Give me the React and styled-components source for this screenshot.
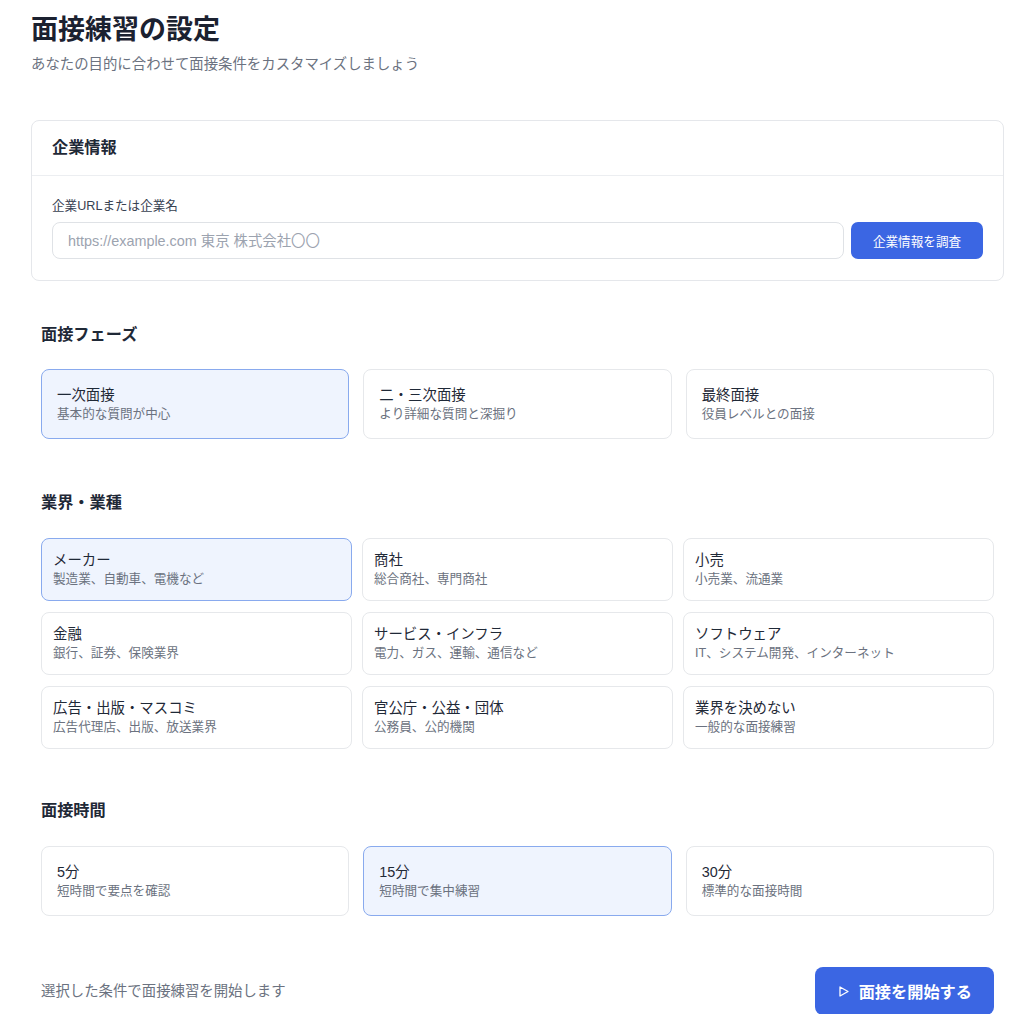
import React from "react";
import styled, { createGlobalStyle, css } from "styled-components";

const Global = createGlobalStyle`
  html, body { margin: 0; padding: 0; background: #ffffff; }
  body {
    font-family: "Liberation Sans", "Noto Sans CJK JP", sans-serif;
    color: #1f2937;
    -webkit-font-smoothing: antialiased;
  }
  * { box-sizing: border-box; }
`;

const Page = styled.main`
  padding: 12px 20px 0 31px;
  display: flex;
  flex-direction: column;
`;

const Title = styled.h1`
  margin: 0;
  font-size: 27px;
  line-height: 36px;
  font-weight: 700;
  color: #1b2130;
`;

const Subtitle = styled.p`
  margin: 5px 0 0;
  font-size: 14.4px;
  line-height: 22px;
  color: #6b7280;
`;

const Panel = styled.section`
  margin-top: 45px;
  border: 1px solid #e5e7eb;
  border-radius: 8px;
  background: #fff;
`;

const PanelHeader = styled.div`
  padding: 16px 20px 17px;
  border-bottom: 1px solid #eceef1;
  font-size: 16.2px;
  line-height: 21px;
  font-weight: 700;
  color: #1f2937;
`;

const PanelBody = styled.div`
  padding: 21px 20px 21px;
`;

const Label = styled.label`
  display: block;
  font-size: 12.6px;
  line-height: 18px;
  color: #374151;
  margin-bottom: 7px;
`;

const InputRow = styled.div`
  display: flex;
  gap: 7px;
`;

const Input = styled.input`
  flex: 1;
  height: 37px;
  border: 1px solid #dfe2e6;
  border-radius: 8px;
  padding: 0 15px;
  font-family: inherit;
  font-size: 14.4px;
  color: #1f2937;
  outline: none;
  &::placeholder { color: #9ca3af; }
`;

const PrimaryButton = styled.button`
  border: none;
  background: #3b66e3;
  color: #fff;
  font-family: inherit;
  cursor: pointer;
  display: inline-flex;
  align-items: center;
  justify-content: center;
  ${(p) =>
    p.$large
      ? css`
          height: 48px;
          padding: 0 22px 0 24px;
          border-radius: 8px;
          font-size: 16.2px;
          font-weight: 700;
          gap: 10px;
        `
      : css`
          height: 37px;
          width: 132px;
          border-radius: 7px;
          font-size: 12.6px;
          font-weight: 400;
        `}
`;

const Section = styled.section`
  margin-top: ${(p) => p.$top}px;
  padding: 0 10px;
`;

const SectionTitle = styled.h2`
  margin: 0 0 ${(p) => p.$gap}px;
  font-size: 16.2px;
  line-height: 22px;
  font-weight: 700;
  color: #1f2937;
`;

const Grid = styled.div`
  display: grid;
  grid-template-columns: repeat(3, 1fr);
  column-gap: ${(p) => p.$gap}px;
  row-gap: 11px;
`;

const Option = styled.button`
  display: flex;
  flex-direction: column;
  justify-content: center;
  align-items: flex-start;
  text-align: left;
  font-family: inherit;
  cursor: pointer;
  border-radius: 8px;
  border: 1px solid ${(p) => (p.$selected ? "#89aaee" : "#e6e8eb")};
  background: ${(p) => (p.$selected ? "#eff4fe" : "#ffffff")};
  padding: ${(p) => (p.$compact ? "0 11px 2px" : "0 15px")};
  height: ${(p) => (p.$compact ? 63 : 70)}px;
`;

const OptionTitle = styled.span`
  font-size: 14.4px;
  line-height: 20px;
  color: #1f2937;
`;

const OptionDesc = styled.span`
  font-size: 12.6px;
  line-height: 18px;
  color: #6b7280;
`;

const Footer = styled.div`
  margin-top: 51px;
  padding: 0 10px;
  display: flex;
  align-items: center;
  justify-content: space-between;
`;

const FooterText = styled.p`
  margin: 0;
  font-size: 14.4px;
  line-height: 22px;
  color: #6b7280;
`;

const PlayIcon = () => (
  <svg width="10" height="11" viewBox="0 0 10 11" fill="none">
    <path d="M1 1 L9 5.5 L1 10 Z" stroke="#fff" strokeWidth="1.3" strokeLinejoin="round" />
  </svg>
);

const phases = [
  { t: "一次面接", d: "基本的な質問が中心", s: true },
  { t: "二・三次面接", d: "より詳細な質問と深掘り" },
  { t: "最終面接", d: "役員レベルとの面接" },
];

const industries = [
  { t: "メーカー", d: "製造業、自動車、電機など", s: true },
  { t: "商社", d: "総合商社、専門商社" },
  { t: "小売", d: "小売業、流通業" },
  { t: "金融", d: "銀行、証券、保険業界" },
  { t: "サービス・インフラ", d: "電力、ガス、運輸、通信など" },
  { t: "ソフトウェア", d: "IT、システム開発、インターネット" },
  { t: "広告・出版・マスコミ", d: "広告代理店、出版、放送業界" },
  { t: "官公庁・公益・団体", d: "公務員、公的機関" },
  { t: "業界を決めない", d: "一般的な面接練習" },
];

const durations = [
  { t: "5分", d: "短時間で要点を確認" },
  { t: "15分", d: "短時間で集中練習", s: true },
  { t: "30分", d: "標準的な面接時間" },
];

export default function App() {
  return (
    <>
      <Global />
      <Page>
        <Title>面接練習の設定</Title>
        <Subtitle>あなたの目的に合わせて面接条件をカスタマイズしましょう</Subtitle>

        <Panel>
          <PanelHeader>企業情報</PanelHeader>
          <PanelBody>
            <Label>企業URLまたは企業名</Label>
            <InputRow>
              <Input placeholder="https://example.com 東京 株式会社〇〇" />
              <PrimaryButton>企業情報を調査</PrimaryButton>
            </InputRow>
          </PanelBody>
        </Panel>

        <Section $top={42}>
          <SectionTitle $gap={24}>面接フェーズ</SectionTitle>
          <Grid $gap={14}>
            {phases.map((o) => (
              <Option key={o.t} $selected={o.s}>
                <OptionTitle>{o.t}</OptionTitle>
                <OptionDesc>{o.d}</OptionDesc>
              </Option>
            ))}
          </Grid>
        </Section>

        <Section $top={52}>
          <SectionTitle $gap={25}>業界・業種</SectionTitle>
          <Grid $gap={10}>
            {industries.map((o) => (
              <Option key={o.t} $selected={o.s} $compact>
                <OptionTitle>{o.t}</OptionTitle>
                <OptionDesc>{o.d}</OptionDesc>
              </Option>
            ))}
          </Grid>
        </Section>

        <Section $top={50}>
          <SectionTitle $gap={25}>面接時間</SectionTitle>
          <Grid $gap={14}>
            {durations.map((o) => (
              <Option key={o.t} $selected={o.s}>
                <OptionTitle>{o.t}</OptionTitle>
                <OptionDesc>{o.d}</OptionDesc>
              </Option>
            ))}
          </Grid>
        </Section>

        <Footer>
          <FooterText>選択した条件で面接練習を開始します</FooterText>
          <PrimaryButton $large>
            <PlayIcon />
            面接を開始する
          </PrimaryButton>
        </Footer>
      </Page>
    </>
  );
}
